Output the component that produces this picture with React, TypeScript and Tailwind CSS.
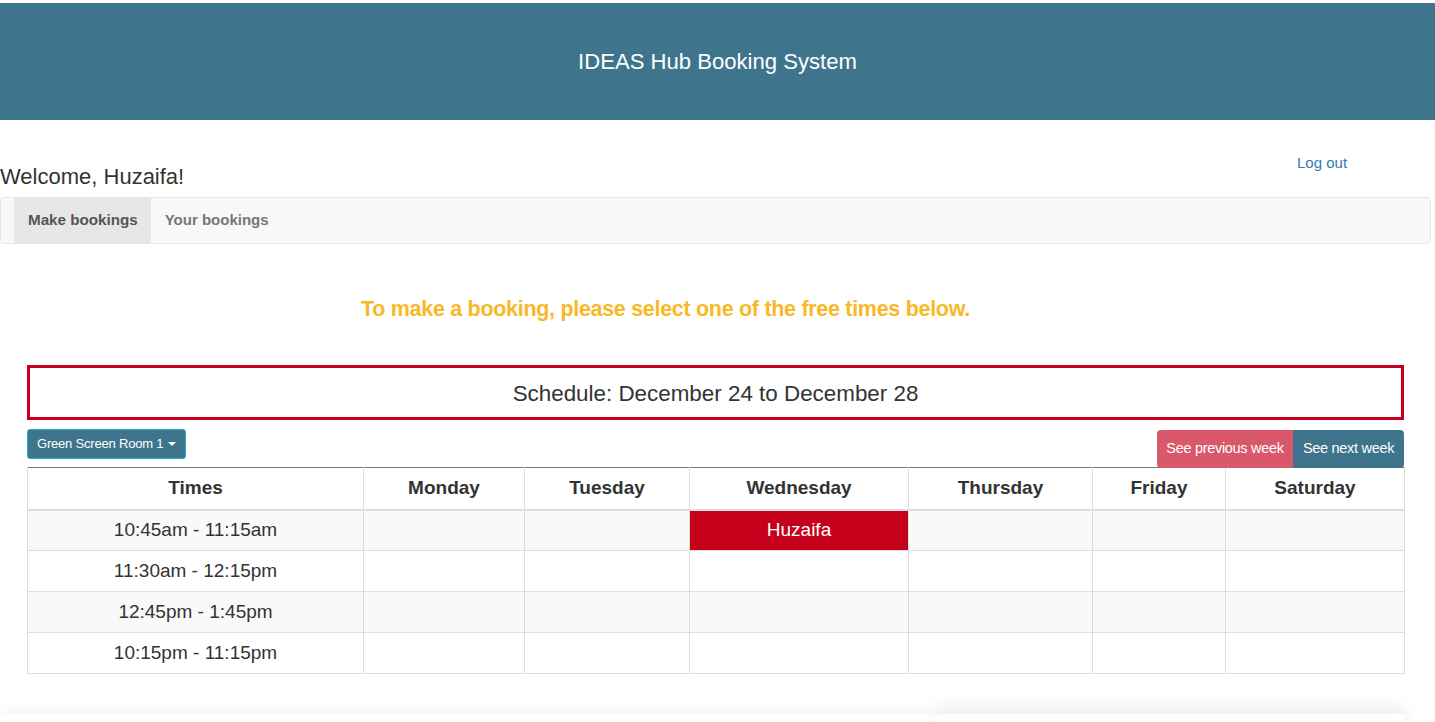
const DAYS = ['Monday', 'Tuesday', 'Wednesday', 'Thursday', 'Friday', 'Saturday']
const COL_WIDTHS = [336, 161, 165, 219, 184, 133, 179]

const SLOTS: { time: string; bookings: Record<string, string> }[] = [
  { time: '10:45am - 11:15am', bookings: { Wednesday: 'Huzaifa' } },
  { time: '11:30am - 12:15pm', bookings: {} },
  { time: '12:45pm - 1:45pm', bookings: {} },
  { time: '10:15pm - 11:15pm', bookings: {} },
]

export default function App() {
  return (
    <div className="min-h-[722px] bg-white text-[#333] font-['Liberation_Sans',Arial,sans-serif] overflow-hidden">
      {/* Header */}
      <div className="pt-[3px]">
        <div className="h-[117px] bg-[#3e758d] flex items-center justify-center pt-[2px]">
          <h1 className="text-white text-[22.1px] leading-none">IDEAS Hub Booking System</h1>
        </div>
      </div>

      {/* Welcome + log out */}
      <div className="relative h-[77px]">
        <a className="absolute left-[1297px] top-[34px] text-[15px] leading-[18px] text-[#337ab7]">Log out</a>
        <div className="absolute left-0 top-[45px] text-[22px] leading-[24px]">Welcome, Huzaifa!</div>
      </div>

      {/* Nav */}
      <div className="w-[1431px] h-[47px] bg-[#f8f8f8] border border-[#e7e7e7] rounded-[4px] pl-[13px] flex">
        <div className="bg-[#e7e7e7] text-[#555] font-bold text-[15.2px] pl-[14px] pr-[13px] flex items-center">Make bookings</div>
        <div className="text-[#777] font-bold text-[15px] px-[14px] flex items-center">Your bookings</div>
      </div>

      <p className="text-center text-[#f9b826] text-[21.5px] leading-[24px] font-bold mt-[53px] ml-[-104px] tracking-[-0.3px]">
        To make a booking, please select one of the free times below.
      </p>

      <div className="mx-[27px] w-[1377px] mt-[44px]">
        <div className="h-[55px] border-[3px] border-[#c5001a] flex items-center justify-center pt-[3px] text-[22.4px] leading-none">
          Schedule: December 24 to December 28
        </div>

        <div className="flex justify-between items-start mt-[9px]">
          <button className="h-[30px] px-[9px] bg-[#3e758d] border border-[#19b3d3] rounded-[3px] text-white text-[13px] flex items-center gap-[4px] tracking-[-0.2px]">
            Green Screen Room 1
            <svg width="8" height="5" viewBox="0 0 8 5" className="ml-[1px]"><path d="M0 0h8L4 4z" fill="white" /></svg>
          </button>
          <div className="flex mt-[1px]">
            <button className="h-[38px] w-[136px] bg-[#d9596a] text-white text-[14.5px] rounded-l-[4px] tracking-[-0.3px]">See previous week</button>
            <button className="h-[38px] w-[111px] bg-[#3e758d] text-white text-[14.5px] rounded-r-[4px] tracking-[-0.3px]">See next week</button>
          </div>
        </div>

        <table className="table-fixed w-full border-collapse text-[19px] -mt-[1px]">
          <colgroup>
            {COL_WIDTHS.map((w, i) => <col key={i} style={{ width: w }} />)}
          </colgroup>
          <thead>
            <tr className="h-[42px] border-t border-[#6b7f82]">
              <th className="border-x border-b-2 border-[#ddd] font-bold">Times</th>
              {DAYS.map(d => (
                <th key={d} className="border-x border-b-2 border-[#ddd] font-bold">{d}</th>
              ))}
            </tr>
          </thead>
          <tbody>
            {SLOTS.map((slot, i) => (
              <tr key={slot.time} className={`h-[41px] ${i % 2 === 0 ? 'bg-[#f9f9f9]' : 'bg-white'}`}>
                <td className="border border-[#ddd] text-center">{slot.time}</td>
                {DAYS.map(d => (
                  slot.bookings[d] ? (
                    <td key={d} className="border border-[#ddd] bg-[#c5001a] text-white text-center">{slot.bookings[d]}</td>
                  ) : (
                    <td key={d} className="border border-[#ddd]" />
                  )
                ))}
              </tr>
            ))}
          </tbody>
        </table>
      </div>

      {/* faint footer shadow */}
      <div className="mt-[40px] h-[30px] flex">
        <div className="flex-1 shadow-[0_-6px_14px_rgba(0,0,0,0.03)]" />
        <div className="w-[470px] mr-[30px] shadow-[0_-8px_16px_rgba(0,0,0,0.07)]" />
      </div>
    </div>
  )
}
